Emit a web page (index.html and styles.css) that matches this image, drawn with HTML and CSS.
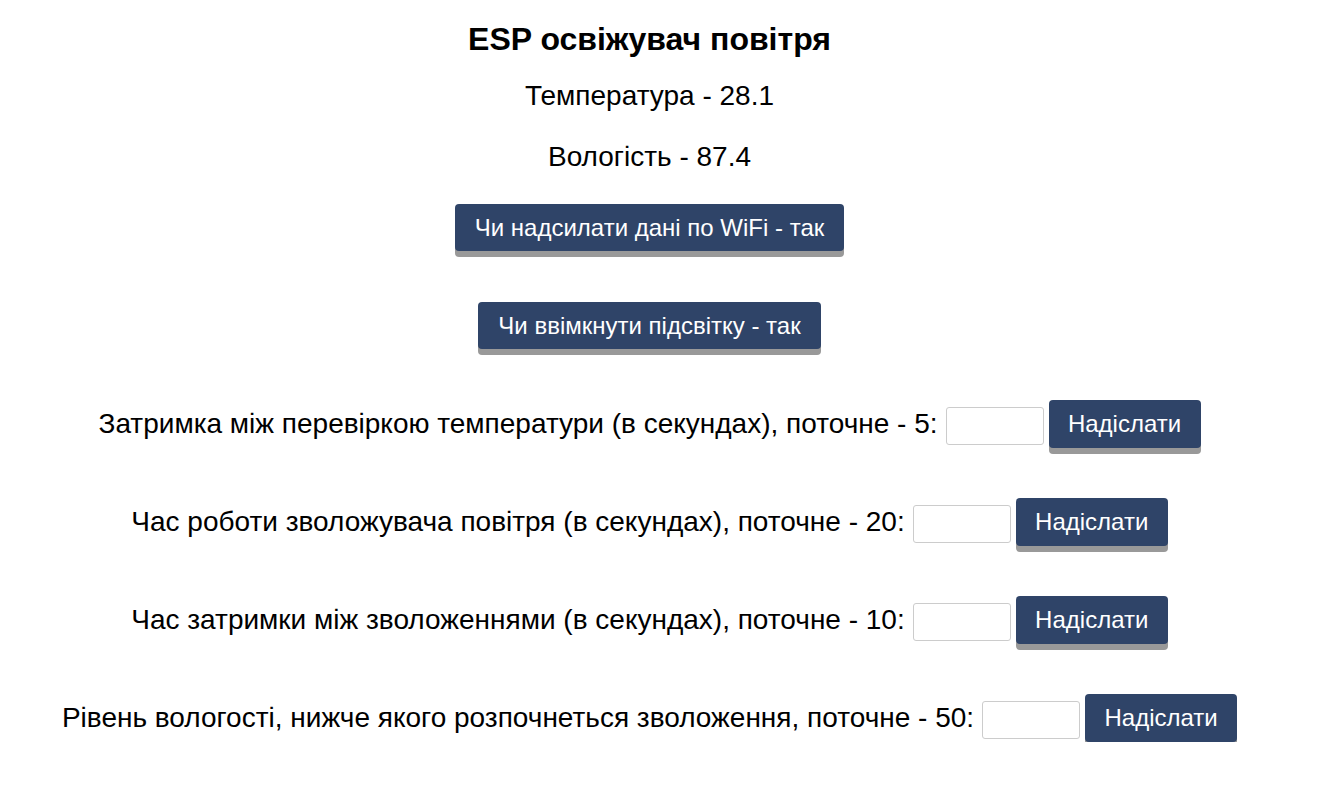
FILE: index.html
```html
<!DOCTYPE html>
<html lang="uk">
<head>
<meta charset="utf-8">
<title>ESP освіжувач повітря</title>
<link rel="stylesheet" href="styles.css">
</head>
<body>
<main class="page">
  <h1 class="title">ESP освіжувач повітря</h1>
  <p class="reading">Температура - 28.1</p>
  <p class="reading">Вологість - 87.4</p>
  <button class="btn toggle">Чи надсилати дані по WiFi - так</button>
  <button class="btn toggle">Чи ввімкнути підсвітку - так</button>
  <form class="row">
    <label class="label">Затримка між перевіркою температури (в секундах), поточне - 5:</label>
    <input class="field" type="text">
    <button class="btn send" type="button">Надіслати</button>
  </form>
  <form class="row">
    <label class="label">Час роботи зволожувача повітря (в секундах), поточне - 20:</label>
    <input class="field" type="text">
    <button class="btn send" type="button">Надіслати</button>
  </form>
  <form class="row">
    <label class="label">Час затримки між зволоженнями (в секундах), поточне - 10:</label>
    <input class="field" type="text">
    <button class="btn send" type="button">Надіслати</button>
  </form>
  <form class="row">
    <label class="label">Рівень вологості, нижче якого розпочнеться зволоження, поточне - 50:</label>
    <input class="field" type="text">
    <button class="btn send" type="button">Надіслати</button>
  </form>
</main>
</body>
</html>
```

FILE: styles.css
```css
* { box-sizing: border-box; }
html, body { margin: 0; padding: 0; background: #fff; }
body {
  font-family: "Liberation Sans", Arial, sans-serif;
  color: #000;
}
.page {
  width: 1299px;
  display: flex;
  flex-direction: column;
  align-items: center;
  padding-top: 21px;
}
.title {
  margin: 0;
  font-size: 32px;
  font-weight: bold;
  line-height: 37px;
}
.reading {
  margin: 22px 0 0;
  font-size: 28px;
  line-height: 32px;
}
.reading + .reading { margin-top: 29px; }
.btn {
  font-family: "Liberation Sans", Arial, sans-serif;
  background: #2f4468;
  color: #fff;
  border: none;
  border-radius: 4px;
  box-shadow: 0 6px #999;
  font-size: 24px;
  cursor: pointer;
}
.toggle {
  padding: 10px 20px;
  height: 47px;
  line-height: 27px;
}
.toggle:first-of-type { margin-top: 31px; }
.toggle + .toggle { margin-top: 51px; }
.row {
  margin-top: 50px;
  display: flex;
  align-items: center;
  height: 48px;
}
.toggle + .row { margin-top: 51px; }
.label {
  font-size: 28px;
  line-height: 32px;
  margin-right: 8px;
}
.field {
  width: 98px;
  height: 38px;
  border: 1px solid #ccc;
  border-radius: 3px;
  margin: 7px 5px 0 0;
  align-self: flex-start;
}
.send {
  width: 152px;
  height: 48px;
  padding: 0;
  line-height: 48px;
}
```
